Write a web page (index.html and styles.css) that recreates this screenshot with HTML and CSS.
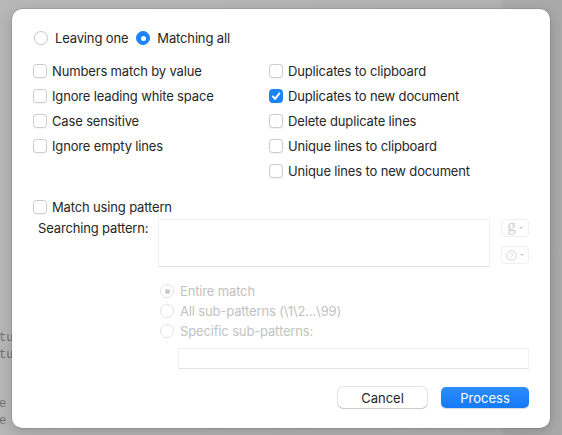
FILE: index.html
```html
<!DOCTYPE html>
<html lang="en">
<head>
<meta charset="utf-8">
<title>Process Duplicate Lines</title>
<link rel="stylesheet" href="styles.css">
</head>
<body>
<pre class="backdrop">tuple
tuple


e end
e end</pre>

<div class="sheet">
  <div class="mode-row">
    <label class="radio"><span class="radio-dot"></span>Leaving one</label>
    <label class="radio"><span class="radio-dot on"></span>Matching all</label>
  </div>

  <div class="options">
    <div class="col col-left">
      <label class="check"><span class="box"></span>Numbers match by value</label>
      <label class="check"><span class="box"></span>Ignore leading white space</label>
      <label class="check"><span class="box"></span>Case sensitive</label>
      <label class="check"><span class="box"></span>Ignore empty lines</label>
    </div>
    <div class="col">
      <label class="check"><span class="box"></span>Duplicates to clipboard</label>
      <label class="check"><span class="box on"><svg viewBox="0 0 14 14" width="14" height="14"><path d="M3.8 7.4 L6.1 9.9 L10.4 4.3" fill="none" stroke="#fff" stroke-width="1.9" stroke-linecap="round" stroke-linejoin="round"/></svg></span>Duplicates to new document</label>
      <label class="check"><span class="box"></span>Delete duplicate lines</label>
      <label class="check"><span class="box"></span>Unique lines to clipboard</label>
      <label class="check"><span class="box"></span>Unique lines to new document</label>
    </div>
  </div>

  <label class="check pattern-toggle"><span class="box"></span>Match using pattern</label>

  <div class="pattern-row">
    <span class="field-label">Searching pattern:</span>
    <div class="pattern-field"></div>
    <div class="popups">
      <span class="popup"><span class="popup-g">g</span><span class="caret"></span></span>
      <span class="popup"><svg viewBox="0 0 12 12" width="11" height="11"><circle cx="6" cy="6" r="5.2" fill="none" stroke="#cfcfcf" stroke-width="1"/><text x="6" y="8.7" text-anchor="middle" font-size="8" font-family="Liberation Sans, sans-serif" fill="#cfcfcf">?</text></svg><span class="caret"></span></span>
    </div>
  </div>

  <div class="sub-group">
    <label class="radio disabled"><span class="radio-dot dim-on"></span>Entire match</label>
    <label class="radio disabled"><span class="radio-dot"></span>All sub-patterns (\1\2...\99)</label>
    <label class="radio disabled"><span class="radio-dot"></span>Specific sub-patterns:</label>
    <div class="sub-field"></div>
  </div>

  <div class="actions">
    <button class="btn">Cancel</button>
    <button class="btn primary">Process</button>
  </div>
</div>
</body>
</html>
```

FILE: styles.css
```css
html, body {
  margin: 0;
  padding: 0;
}

body {
  width: 562px;
  height: 435px;
  overflow: hidden;
  position: relative;
  background: linear-gradient(to right, #b7b7b7 0, #b3b3b3 500px, #ababab 505px, #a9a9a9 100%);
  font-family: "Inter", "Liberation Sans", sans-serif;
}

/* document text showing behind the sheet */
.backdrop {
  margin: 0;
  padding-top: 330px;
  margin-left: -1px;
  font-family: "Liberation Mono", monospace;
  font-size: 12px;
  line-height: 16.5px;
  color: #6f6f6f;
}

.sheet {
  position: absolute;
  left: 12px;
  top: 9px;
  width: 538px;
  height: 419px;
  box-sizing: border-box;
  padding: 20px 21px 20px 21px;
  background: #ffffff;
  border-radius: 10px;
  box-shadow: 0 0 0 0.5px rgba(0, 0, 0, 0.18), 0 4px 14px rgba(0, 0, 0, 0.18);
  font-size: 13px;
  letter-spacing: -0.15px;
  color: #262626;
  display: flex;
  flex-direction: column;
}

label {
  display: flex;
  align-items: center;
  white-space: nowrap;
}

/* radio buttons */
.mode-row {
  display: flex;
  gap: 8px;
  height: 18px;
  padding-left: 1px;
}

.radio {
  height: 18px;
  gap: 7px;
}

.radio-dot {
  width: 14px;
  height: 14px;
  border-radius: 50%;
  border: 1px solid #c9c9c9;
  box-sizing: border-box;
  background: #fff;
  position: relative;
  flex: none;
  box-shadow: 0 0.5px 1px rgba(0, 0, 0, 0.05);
}

.radio-dot.on {
  background: #1b84fb;
  border-color: #1b84fb;
}

.radio-dot.on::after,
.radio-dot.dim-on::after {
  content: "";
  position: absolute;
  left: 50%;
  top: 50%;
  width: 5px;
  height: 5px;
  margin: -2.5px 0 0 -2.5px;
  border-radius: 50%;
  background: #fff;
}

.radio-dot.dim-on::after {
  background: #c9c9c9;
}

.radio.disabled {
  color: #c2c2c2;
  height: 20px;
  gap: 6px;
}

.radio.disabled .radio-dot {
  border-color: #e2e2e2;
  box-shadow: none;
}

/* checkboxes */
.options {
  display: flex;
  margin-top: 11px;
}

.col {
  display: flex;
  flex-direction: column;
}

.col-left {
  width: 236px;
}

.check {
  height: 25px;
  gap: 5px;
}

.box {
  width: 14px;
  height: 14px;
  box-sizing: border-box;
  border: 1px solid #cbcbcb;
  border-radius: 3.5px;
  background: #fff;
  flex: none;
  display: flex;
  align-items: center;
  justify-content: center;
  box-shadow: 0 0.5px 1px rgba(0, 0, 0, 0.05);
}

.box.on {
  background: #1b84fb;
  border-color: #1b84fb;
}

.box svg {
  flex: none;
}

.pattern-toggle {
  margin-top: 11px;
}

/* pattern input */
.pattern-row {
  display: flex;
  height: 48px;
}

.field-label {
  width: 120px;
  padding-left: 5px;
  padding-top: 2px;
  line-height: 15px;
}

.pattern-field {
  width: 332px;
  height: 48px;
  box-sizing: border-box;
  border: 1px solid #f0f0f0;
  border-bottom-color: #e2e2e2;
}

.popups {
  display: flex;
  flex-direction: column;
  gap: 9px;
  margin-left: 11px;
}

.popup {
  width: 28px;
  height: 18px;
  box-sizing: border-box;
  border: 1px solid #f0f0f0;
  border-radius: 4px;
  display: flex;
  align-items: center;
  justify-content: center;
  gap: 3px;
  color: #cfcfcf;
}

.popup-g {
  font-family: "Liberation Serif", serif;
  font-size: 17px;
  line-height: 14px;
  margin-top: -4px;
}

.caret {
  width: 0;
  height: 0;
  border-left: 2px solid transparent;
  border-right: 2px solid transparent;
  border-top: 2.5px solid #c9c9c9;
}

/* sub-pattern choices */
.sub-group {
  display: flex;
  flex-direction: column;
  margin-top: 14px;
  padding-left: 127px;
}

.sub-field {
  margin-top: 7px;
  margin-left: 18px;
  height: 21px;
  box-sizing: border-box;
  border: 1px solid #f0f0f0;
  border-bottom-color: #e2e2e2;
}

/* buttons */
.actions {
  margin-top: auto;
  display: flex;
  justify-content: flex-end;
  gap: 14px;
}

.btn {
  font: inherit;
  font-size: 13px;
  width: 89px;
  height: 21px;
  padding: 0;
  border-radius: 5px;
  border: none;
  background: #fff;
  color: #262626;
  box-shadow: 0 0 0 0.5px rgba(0, 0, 0, 0.22), 0 1px 1px rgba(0, 0, 0, 0.12);
}

.btn.primary {
  width: 88px;
  color: #fff;
  background: linear-gradient(#2c8dff, #1679f6);
  box-shadow: 0 0.5px 1px rgba(0, 0, 0, 0.15);
}
```
